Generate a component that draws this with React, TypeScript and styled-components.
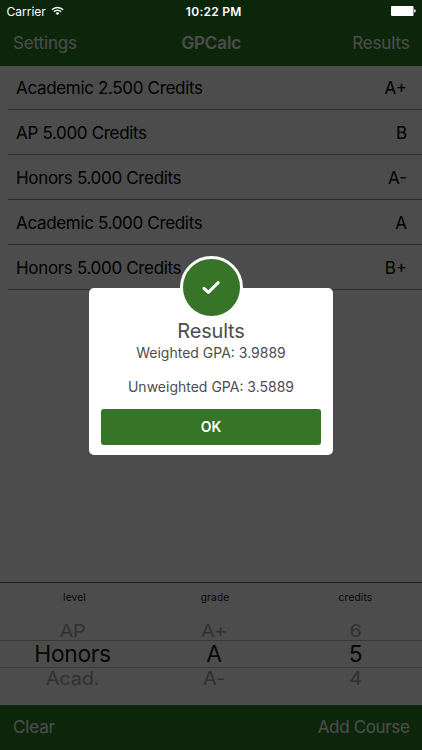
import React from "react";
import styled, { createGlobalStyle } from "styled-components";

const GlobalStyle = createGlobalStyle`
  * { box-sizing: border-box; }
  body {
    margin: 0;
    background: #fff;
    font-family: Inter, "Liberation Sans", sans-serif;
    -webkit-font-smoothing: antialiased;
  }
`;

const Screen = styled.div`
  position: relative;
  display: flex;
  flex-direction: column;
  width: 422px;
  height: 750px;
  overflow: hidden;
  background: #fff;
`;

const NavBar = styled.header`
  display: grid;
  grid-template-columns: 1fr auto 1fr;
  align-items: center;
  height: 65.6px;
  padding: 21px 12.5px 0 13px;
  background: #2a7f2a;
  flex: none;
`;

const BarButton = styled.button<{ $align?: "left" | "right"; $spacing?: string }>`
  border: 0;
  padding: 0;
  background: none;
  color: #fff;
  font: 400 17px/22px Inter, sans-serif;
  letter-spacing: ${(p) => p.$spacing ?? "-0.15px"};
  text-align: ${(p) => p.$align ?? "left"};
`;

const NavTitle = styled.h1`
  margin: 0;
  color: #fff;
  font-size: 17px;
  line-height: 22px;
  font-weight: 600;
  letter-spacing: -0.1px;
`;

const CourseList = styled.ul`
  flex: 1;
  margin: 0;
  padding: 0;
  list-style: none;
`;

const CourseRow = styled.li`
  display: flex;
  align-items: center;
  justify-content: space-between;
  height: 44.8px;
  margin-left: 8px;
  padding: 2px 15px 0 8px;
  border-bottom: 1px solid #96969a;
  color: #000;
  font-size: 17px;
  letter-spacing: -0.33px;
`;

const Grade = styled.span`
  letter-spacing: 0;
`;

const PickerPanel = styled.section`
  flex: none;
  height: 122.7px;
  border-top: 1.4px solid #2a7f2a;
`;

const PickerLabels = styled.div`
  display: grid;
  grid-template-columns: 149px 132px 149px;
  margin: 0 -4px 0 0;
  padding-top: 7px;
  font-size: 10.2px;
  line-height: 14px;
  letter-spacing: 0.15px;
  text-align: center;
  color: #222;
`;

const Wheels = styled.div`
  display: grid;
  grid-template-columns: 145px 138px 145px;
  margin: 14px -6px 0 0;
`;

const Wheel = styled.div`
  display: flex;
  flex-direction: column;
  text-align: center;
`;

const WheelItem = styled.div<{ $selected?: boolean }>`
  height: ${(p) => (p.$selected ? "28px" : "22px")};
  line-height: ${(p) => (p.$selected ? "25.6px" : "22px")};
  font-size: ${(p) => (p.$selected ? "22.8px" : "20px")};
  letter-spacing: ${(p) => (p.$selected ? "-0.35px" : "-0.2px")};
  color: ${(p) => (p.$selected ? "#181818" : "#a6a6a6")};
  border: solid #c0c0c0;
  border-width: ${(p) => (p.$selected ? "1px 0" : "0")};
`;

const WheelText = styled.span<{ $tilt?: "above" | "below" }>`
  display: inline-block;
  transform: ${(p) =>
    p.$tilt === "above"
      ? "translateY(1.7px) scaleY(0.88)"
      : p.$tilt === "below"
        ? "scaleY(0.92)"
        : "none"};
`;

const Toolbar = styled.footer`
  display: flex;
  align-items: center;
  justify-content: space-between;
  height: 45.3px;
  flex: none;
  padding: 0 12.5px 0 13px;
  background: #2a7f2a;
`;

const Backdrop = styled.div`
  position: absolute;
  inset: 0;
  display: flex;
  justify-content: center;
  align-items: flex-start;
  padding-top: 288px;
  background: rgba(0, 0, 0, 0.7);
`;

const StatusBar = styled.div`
  position: absolute;
  inset: 0 0 auto;
  display: grid;
  grid-template-columns: 1fr auto 1fr;
  align-items: center;
  height: 22px;
  padding: 0 6px 0 6.5px;
  color: #fff;
  font-size: 12px;
`;

const Carrier = styled.div`
  display: flex;
  align-items: center;
  gap: 5px;
`;

const Clock = styled.div`
  font-weight: 600;
  letter-spacing: 0.28px;
  padding-left: 5px;
`;

const BatteryIcon = styled.svg`
  justify-self: end;
`;

const Dialog = styled.div`
  position: relative;
  display: flex;
  flex-direction: column;
  align-items: center;
  width: 244px;
  height: 167px;
  padding: 31px 12px 10.5px;
  border-radius: 5px;
  background: #fff;
  color: #4d4d4d;
  text-align: center;
`;

const Badge = styled.div`
  position: absolute;
  top: -32px;
  left: 90.5px;
  display: flex;
  width: 63px;
  height: 63px;
  border: 3px solid #fff;
  border-radius: 50%;
  background: #367427;
`;

const DialogTitle = styled.h2`
  margin: 0;
  font-size: 20px;
  line-height: 25px;
  font-weight: 400;
  letter-spacing: -0.2px;
`;

const DialogText = styled.p`
  margin: 0;
  font-size: 14px;
  line-height: 17.2px;
  white-space: pre-line;
`;

const OkButton = styled.button`
  width: 220px;
  height: 35.5px;
  margin-top: auto;
  border: 0;
  border-radius: 3px;
  background: #367427;
  color: #fff;
  font: 600 14px/34px Inter, sans-serif;
  padding: 1px 0 0;
`;

const courses = [
  ["Academic 2.500 Credits", "A+"],
  ["AP 5.000 Credits", "B"],
  ["Honors 5.000 Credits", "A-"],
  ["Academic 5.000 Credits", "A"],
  ["Honors 5.000 Credits", "B+"],
];

const wheels = [
  ["AP", "Honors", "Acad."],
  ["A+", "A", "A-"],
  ["6", "5", "4"],
];

const tilts = ["above", undefined, "below"] as const;

export default function App() {
  return (
    <Screen>
      <GlobalStyle />
      <NavBar>
        <BarButton>Settings</BarButton>
        <NavTitle>GPCalc</NavTitle>
        <BarButton $align="right">Results</BarButton>
      </NavBar>
      <CourseList>
        {courses.map(([name, grade], i) => (
          <CourseRow key={i}>
            <span>{name}</span>
            <Grade>{grade}</Grade>
          </CourseRow>
        ))}
      </CourseList>
      <PickerPanel>
        <PickerLabels>
          <span>level</span>
          <span>grade</span>
          <span>credits</span>
        </PickerLabels>
        <Wheels>
          {wheels.map((items) => (
            <Wheel key={items[1]}>
              {items.map((item, i) => (
                <WheelItem key={item} $selected={i === 1}>
                  <WheelText $tilt={tilts[i]}>{item}</WheelText>
                </WheelItem>
              ))}
            </Wheel>
          ))}
        </Wheels>
      </PickerPanel>
      <Toolbar>
        <BarButton>Clear</BarButton>
        <BarButton $spacing="-0.35px">Add Course</BarButton>
      </Toolbar>
      <Backdrop>
        <Dialog>
          <Badge>
            <svg width="57" height="57" viewBox="0 0 57 57">
              <path
                d="M21 29.3 L25.4 33.4 L35.2 23.6"
                fill="none"
                stroke="#fff"
                strokeWidth="3"
                strokeLinecap="round"
                strokeLinejoin="round"
              />
            </svg>
          </Badge>
          <DialogTitle>Results</DialogTitle>
          <DialogText>{"Weighted GPA: 3.9889\n\nUnweighted GPA: 3.5889"}</DialogText>
          <OkButton>OK</OkButton>
        </Dialog>
      </Backdrop>
      <StatusBar>
        <Carrier>
          Carrier
          <svg width="13" height="10" viewBox="0 0 14 10">
            <g fill="none" stroke="#fff" strokeWidth="1.6">
              <path d="M1 3.6 A8.5 8.5 0 0 1 13 3.6" />
              <path d="M3.1 5.8 A5.5 5.5 0 0 1 10.9 5.8" />
            </g>
            <path d="M7 9.4 L4.9 7.3 A3 3 0 0 1 9.1 7.3 Z" fill="#fff" />
          </svg>
        </Carrier>
        <Clock>10:22 PM</Clock>
        <BatteryIcon width="25" height="10" viewBox="0 0 25 10">
          <rect x="0" y="0" width="22.5" height="10" rx="1" fill="#fff" />
          <path d="M23.2 3.3 Q24.8 3.6 24.8 5 Q24.8 6.4 23.2 6.7 Z" fill="#fff" />
        </BatteryIcon>
      </StatusBar>
    </Screen>
  );
}
